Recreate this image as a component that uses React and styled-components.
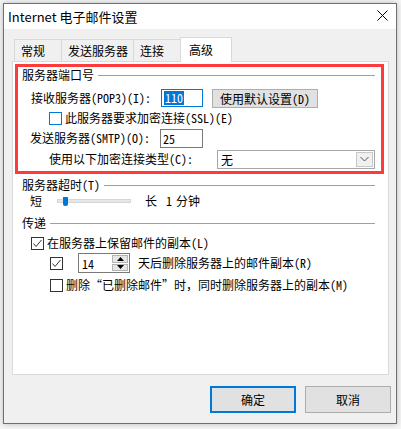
import React from 'react';
import styled, { createGlobalStyle } from 'styled-components';

const UI_FONT = `"Noto Sans CJK SC", "Liberation Sans", sans-serif`;
const SONG_FONT = `"Noto Sans Mono CJK SC", "Noto Sans CJK SC", "Liberation Mono", monospace`;

const GlobalStyle = createGlobalStyle`
  html, body {
    margin: 0;
    padding: 0;
    background: #f6f6f6;
  }
  body {
    font-family: ${UI_FONT};
    color: #000;
  }
  * {
    box-sizing: border-box;
  }
`;

const Desktop = styled.div`
  width: 401px;
  height: 429px;
  padding: 3px 0 0 3px;
  overflow: hidden;
  background: #f6f6f6;
`;

const Window = styled.div`
  width: 394px;
  height: 421px;
  display: flex;
  flex-direction: column;
  background: #f0f0f0;
  border: 1px solid #6f6f6f;
  box-shadow: 0 0 6px rgba(0, 0, 0, 0.25);
`;

const TitleBar = styled.div`
  height: 25px;
  flex: none;
  display: flex;
  align-items: center;
  justify-content: space-between;
  padding: 0 8px 0 4px;
  background: #fff;
`;

const Title = styled.span`
  font-family: ${UI_FONT};
  font-size: 13px;
  line-height: 16px;
  margin-top: 1px;
`;

const CloseIcon = styled.svg`
  width: 11px;
  height: 11px;
  margin-top: -2px;
`;

const Body = styled.div`
  flex: 1;
  display: flex;
  flex-direction: column;
  padding: 8px 7px 10px 8px;
`;

const TabStrip = styled.div`
  height: 24px;
  display: flex;
  align-items: flex-end;
  padding-left: 2px;
`;

const Tab = styled.div`
  position: relative;
  z-index: ${p => (p.$active ? 2 : 1)};
  width: ${p => p.$w}px;
  height: ${p => (p.$active ? 25 : 22)}px;
  margin-left: -1px;
  margin-bottom: ${p => (p.$active ? -1 : 0)}px;
  padding-left: ${p => (p.$active ? 8 : 6)}px;
  display: flex;
  align-items: center;
  background: ${p => (p.$active ? '#fff' : '#f0f0f0')};
  border: 1px solid #d9d9d9;
  border-bottom: none;
  font-family: ${UI_FONT};
  font-size: 12px;
  line-height: 14px;
  &:first-child {
    margin-left: 0;
  }
`;

const Panel = styled.div`
  height: 314px;
  flex: none;
  background: #fff;
  border: 1px solid #d9d9d9;
  padding: 2px 4px 0 2px;
`;

const Highlight = styled.div`
  border: 3px solid #fd3b3b;
  padding: 0 6px 2px 4px;
`;

const Group = styled.div`
  margin-top: ${p => p.$top || 0}px;
  padding: 0 9px 0 7px;
`;

const GroupHeader = styled.div`
  height: 16px;
  display: flex;
  align-items: center;
  margin-bottom: ${p => p.$gap || 0}px;
`;

const Rule = styled.div`
  flex: 1;
  height: 1px;
  margin-left: 4px;
  background: #a0a0a0;
`;

const Label = styled.span`
  flex: none;
  width: ${p => (p.$w ? `${p.$w}px` : 'auto')};
  margin-left: ${p => p.$gap || 0}px;
  font-family: ${SONG_FONT};
  font-size: 12px;
  line-height: 16px;
  white-space: nowrap;
`;

const Row = styled.div`
  height: ${p => p.$h || 20}px;
  margin-top: ${p => p.$top || 0}px;
  padding-left: ${p => p.$indent || 0}px;
  display: flex;
  align-items: center;
`;

const TextBox = styled.div`
  width: ${p => p.$w}px;
  height: ${p => p.$h || 18}px;
  display: flex;
  align-items: center;
  padding-left: 2px;
  background: #fff;
  border: 1px solid ${p => (p.$focus ? '#0078d7' : '#7a7a7a')};
  font-family: ${SONG_FONT};
  font-size: 12px;
`;

const Selected = styled.span`
  background: #0078d7;
  color: #fff;
  line-height: 14px;
  padding: 0 1px;
`;

const PushButton = styled.div`
  width: ${p => p.$w}px;
  height: 19px;
  margin-left: ${p => p.$gap || 0}px;
  display: flex;
  align-items: center;
  justify-content: center;
  background: #e1e1e1;
  border: 1px solid #adadad;
  font-family: ${SONG_FONT};
  font-size: 12px;
`;

const Box = styled.div`
  width: 13px;
  height: 13px;
  flex: none;
  display: flex;
  align-items: center;
  justify-content: center;
  background: #fff;
  border: 1px solid ${p => (p.$focus ? '#0078d7' : '#333')};
`;

const Check = ({ checked, focus }) => (
  <Box $focus={focus}>
    {checked && (
      <svg width="11" height="11" viewBox="0 0 11 11">
        <polyline points="1.5,5.5 4,8.5 9.5,2" fill="none" stroke="#333" strokeWidth="1" />
      </svg>
    )}
  </Box>
);

const Select = styled.div`
  width: 158px;
  height: 19px;
  display: flex;
  align-items: center;
  justify-content: space-between;
  padding: 0 1px 0 3px;
  background: #fff;
  border: 1px solid #a6a6a6;
  font-family: ${UI_FONT};
  font-size: 12px;
`;

const DropArrow = styled.div`
  width: 17px;
  height: 15px;
  display: flex;
  align-items: center;
  justify-content: center;
  background: #f0f0f0;
  border: 1px solid #c8c8c8;
`;

const Slider = styled.div`
  position: relative;
  width: 74px;
  height: 16px;
  margin-left: 15px;
  display: flex;
  align-items: center;
`;

const Track = styled.div`
  width: 100%;
  height: 4px;
  background: #e7e7e7;
  border: 1px solid #d6d6d6;
`;

const Thumb = styled.div`
  position: absolute;
  left: 6px;
  top: 4px;
  width: 5px;
  height: 9px;
  background: #0078d7;
  border-radius: 0 0 2px 2px;
`;

const SpinBox = styled.div`
  width: 52px;
  height: 20px;
  margin-left: 15px;
  display: flex;
  align-items: stretch;
  background: #fff;
  border: 1px solid #7a7a7a;
`;

const SpinValue = styled.span`
  flex: 1;
  padding-left: 3px;
  display: flex;
  align-items: center;
  font-family: ${SONG_FONT};
  font-size: 12px;
`;

const SpinButtons = styled.div`
  width: 17px;
  display: flex;
  flex-direction: column;
  padding: 1px 1px 1px 0;
  gap: 1px;
`;

const SpinButton = styled.div`
  flex: 1;
  display: flex;
  align-items: center;
  justify-content: center;
  background: #e6e6e6;
  border: 1px solid #b4b4b4;
`;

const Footer = styled.div`
  display: flex;
  justify-content: flex-end;
  gap: 9px;
  margin-top: 11px;
  margin-right: -2px;
`;

const DialogButton = styled.div`
  width: 86px;
  height: 27px;
  display: flex;
  align-items: center;
  justify-content: center;
  background: #e1e1e1;
  border: ${p => (p.$primary ? '2px solid #0078d7' : '1px solid #adadad')};
  font-family: ${UI_FONT};
  font-size: 12px;
`;

const tabs = [
  { name: '常规', w: 48 },
  { name: '发送服务器', w: 73 },
  { name: '连接', w: 48 },
  { name: '高级', w: 52, active: true },
];

export default function App() {
  return (
    <Desktop>
      <GlobalStyle />
      <Window>
        <TitleBar>
          <Title>Internet 电子邮件设置</Title>
          <CloseIcon viewBox="0 0 11 11">
            <path d="M0.5 0.5 L10.5 10.5 M10.5 0.5 L0.5 10.5" stroke="#000" strokeWidth="1" />
          </CloseIcon>
        </TitleBar>
        <Body>
          <TabStrip>
            {tabs.map(t => (
              <Tab key={t.name} $w={t.w} $active={t.active}>{t.name}</Tab>
            ))}
          </TabStrip>
          <Panel>
            <Highlight>
              <GroupHeader $gap={5}>
                <Label>服务器端口号</Label>
                <Rule />
              </GroupHeader>
              <Row $indent={9}>
                <Label $w={130}>接收服务器(POP3)(I):</Label>
                <TextBox $w={42} $focus><Selected>110</Selected></TextBox>
                <PushButton $w={106} $gap={9}>使用默认设置(D)</PushButton>
              </Row>
              <Row $indent={27}>
                <Check focus />
                <Label $gap={3}>此服务器要求加密连接(SSL)(E)</Label>
              </Row>
              <Row $indent={8}>
                <Label $w={130}>发送服务器(SMTP)(O):</Label>
                <TextBox $w={43} $h={19}>25</TextBox>
              </Row>
              <Row $indent={27} $top={1}>
                <Label $w={168}>使用以下加密连接类型(C):</Label>
                <Select>
                  <span>无</span>
                  <DropArrow>
                    <svg width="9" height="6" viewBox="0 0 9 6">
                      <polyline points="0.5,1 4.5,5 8.5,1" fill="none" stroke="#555" strokeWidth="1" />
                    </svg>
                  </DropArrow>
                </Select>
              </Row>
            </Highlight>

            <Group $top={3}>
              <GroupHeader>
                <Label>服务器超时(T)</Label>
                <Rule />
              </GroupHeader>
              <Row $indent={8} $h={16}>
                <Label>短</Label>
                <Slider>
                  <Track />
                  <Thumb />
                </Slider>
                <Label $gap={14}>长</Label>
                <Label $gap={9}>1</Label>
                <Label $gap={4}>分钟</Label>
              </Row>
            </Group>

            <Group $top={6}>
              <GroupHeader>
                <Label>传递</Label>
                <Rule />
              </GroupHeader>
              <Row $indent={9} $top={2}>
                <Check checked />
                <Label $gap={3}>在服务器上保留邮件的副本(L)</Label>
              </Row>
              <Row $indent={28}>
                <Check checked />
                <SpinBox>
                  <SpinValue>14</SpinValue>
                  <SpinButtons>
                    <SpinButton>
                      <svg width="7" height="4" viewBox="0 0 7 4"><polygon points="3.5,0 7,4 0,4" fill="#000" /></svg>
                    </SpinButton>
                    <SpinButton>
                      <svg width="7" height="4" viewBox="0 0 7 4"><polygon points="0,0 7,0 3.5,4" fill="#000" /></svg>
                    </SpinButton>
                  </SpinButtons>
                </SpinBox>
                <Label $gap={8}>天后删除服务器上的邮件副本(R)</Label>
              </Row>
              <Row $indent={28} $top={2}>
                <Check />
                <Label $gap={3}>删除“已删除邮件”时，同时删除服务器上的副本(M)</Label>
              </Row>
            </Group>
          </Panel>
          <Footer>
            <DialogButton $primary>确定</DialogButton>
            <DialogButton>取消</DialogButton>
          </Footer>
        </Body>
      </Window>
    </Desktop>
  );
}
